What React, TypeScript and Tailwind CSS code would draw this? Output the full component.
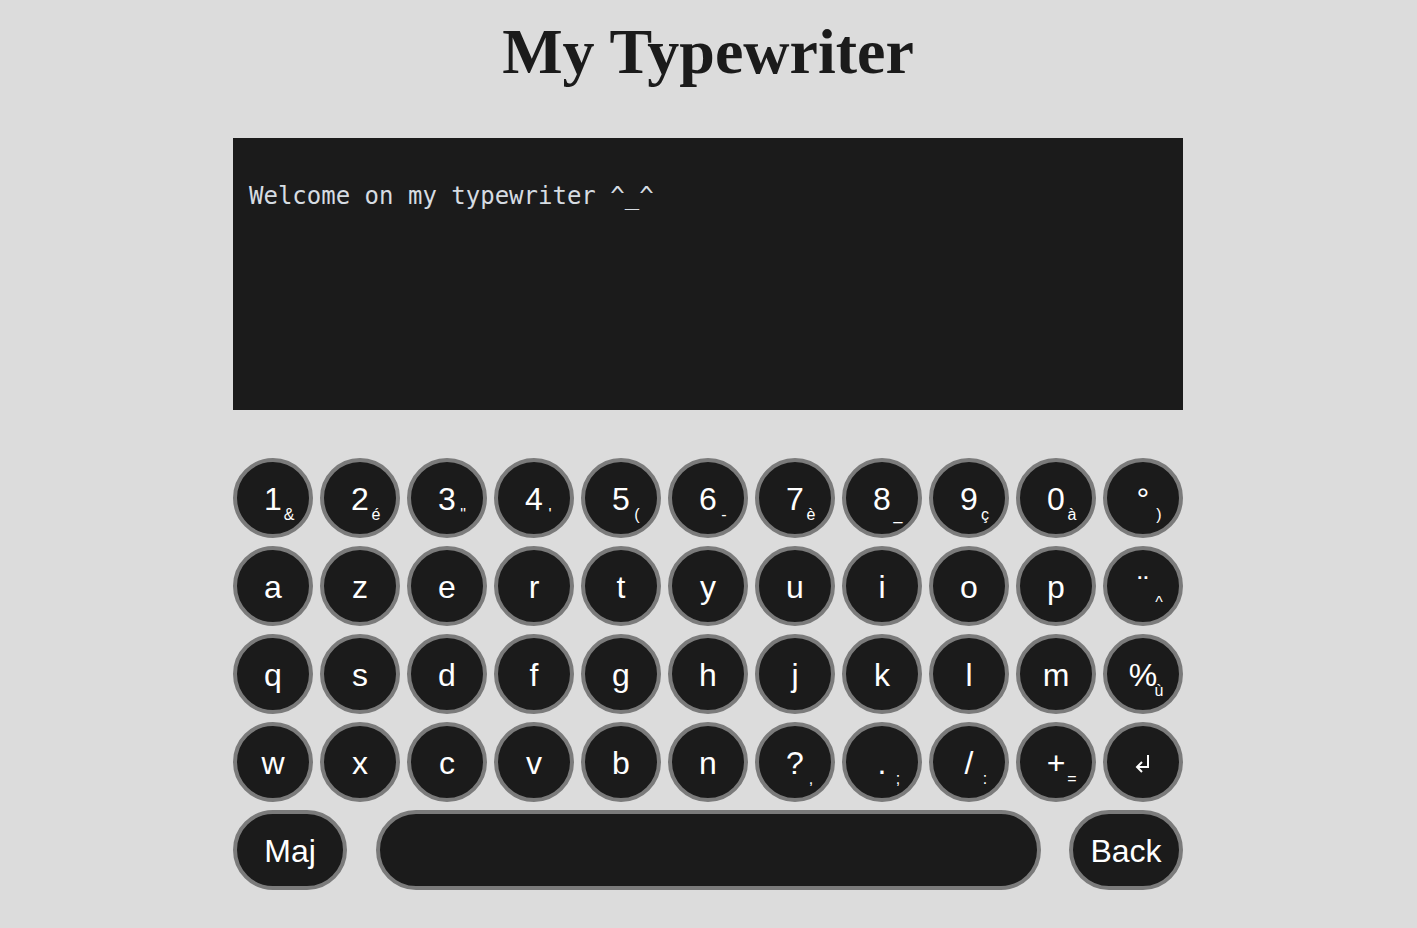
import React from "react";

type KeyDef = { main: React.ReactNode; sub?: string };

const rows: KeyDef[][] = [
  [
    { main: "1", sub: "&" },
    { main: "2", sub: "é" },
    { main: "3", sub: '"' },
    { main: "4", sub: "'" },
    { main: "5", sub: "(" },
    { main: "6", sub: "-" },
    { main: "7", sub: "è" },
    { main: "8", sub: "_" },
    { main: "9", sub: "ç" },
    { main: "0", sub: "à" },
    { main: "°", sub: ")" },
  ],
  "azertyuiop".split("").map((c) => ({ main: c })).concat([{ main: "¨", sub: "^" }]),
  "qsdfghjklm".split("").map((c) => ({ main: c })).concat([{ main: "%", sub: "ù" }]),
  [
    ...["w", "x", "c", "v", "b", "n"].map((c) => ({ main: c })),
    { main: "?", sub: "," },
    { main: ".", sub: ";" },
    { main: "/", sub: ":" },
    { main: "+", sub: "=" },
    { main: <EnterIcon /> },
  ],
];

function EnterIcon() {
  return (
    <svg width="16" height="19" viewBox="0 0 16 19" fill="none" stroke="white" strokeWidth="2">
      <path d="M13 1 V13 H2" />
      <path d="M7 8 L2 13 L7 18" />
    </svg>
  );
}

const keyBase =
  "relative h-[80px] flex items-center justify-center rounded-full border-4 border-[#7b7b7b] bg-[#1b1b1b] pt-[2px] text-white text-[32px] leading-none";

function Key({ k }: { k: KeyDef }) {
  return (
    <div className={`${keyBase} w-[80px]`}>
      <span>{k.main}</span>
      {k.sub && (
        <span className="absolute left-[44px] top-[45px] w-[16px] text-center text-[16px] leading-none">
          {k.sub}
        </span>
      )}
    </div>
  );
}

export default function App() {
  return (
    <div className="min-h-screen bg-[#dcdcdc] pr-px font-['Liberation_Sans',Arial,sans-serif]">
      <div className="mx-auto w-[950px]">
        <h1 className="pt-[15px] text-center font-['Liberation_Serif','Times_New_Roman',serif] text-[64px] font-bold leading-[74px] text-[#1b1b1b]">
          My Typewriter
        </h1>

        <div className="mt-[49px] h-[272px] bg-[#1b1b1b] pl-4 pt-[44px] font-['DejaVu_Sans_Mono',monospace] text-[24px] leading-[28px] text-[#d6dce2]">
          Welcome on my typewriter ^_^
        </div>

        <div className="mt-[48px] flex flex-col gap-[8px]">
          {rows.map((row, i) => (
            <div key={i} className="grid grid-cols-11 gap-[7px]">
              {row.map((k, j) => (
                <Key key={j} k={k} />
              ))}
            </div>
          ))}
          <div className="flex justify-between">
            <div className={`${keyBase} w-[114px]`}>Maj</div>
            <div className={`${keyBase} w-[665px]`} />
            <div className={`${keyBase} w-[114px]`}>Back</div>
          </div>
        </div>
      </div>
    </div>
  );
}
